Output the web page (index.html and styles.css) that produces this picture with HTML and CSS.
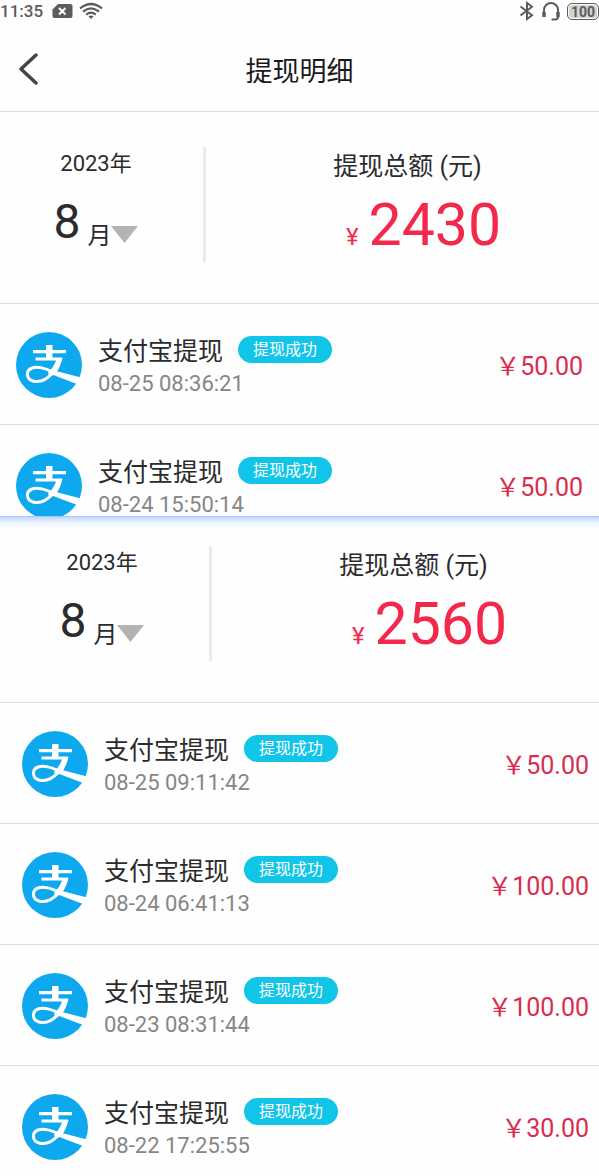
FILE: index.html
```html
<!DOCTYPE html>
<html lang="zh-CN">
<head>
<meta charset="utf-8">
<meta name="viewport" content="width=device-width, initial-scale=1">
<title>提现明细</title>
<link rel="stylesheet" href="styles.css">
</head>
<body>
<svg class="defs" aria-hidden="true">
  <symbol id="alipay" viewBox="0 0 66 66">
    <circle cx="33" cy="33" r="33" fill="#0ea8ee"/>
    <path d="M17 18H50V21.200H17ZM30 13H36.500V27H30ZM19.500 25.500H46V28.500H19.500Z" fill="#fff"/>
    <path d="M46.500 26C45 32 43 37 40 41L34 45L32 41C36 37 39 32 40.500 27Z" fill="#fff"/>
    <path d="M36 41.500C31 47 24 51 17 49C10 47 9.500 38.500 16 36C22 33.500 30 37 40 41" fill="none" stroke="#fff" stroke-width="3"/>
    <path d="M29 36.500L40 39L65 45.500L61 52L36 42.500Z" fill="#fff"/>
  </symbol>
</svg>

<div class="status">
  <div class="status-group">
    <span class="clock">11:35</span>
    <svg width="21" height="16" viewBox="0 0 21 16" aria-hidden="true"><path d="M6 1H18.500Q20.500 1 20.500 3V13Q20.500 15 18.500 15H2.500Q.5 15 .5 13V6.500Z" fill="#5c5c5c"/><path d="M7 5L13.500 11.500M13.500 5L7 11.500" stroke="#fff" stroke-width="2"/></svg>
    <svg width="24" height="18" viewBox="0 0 24 18" fill="none" stroke="#5c5c5c" stroke-width="2.200" aria-hidden="true"><path d="M1 6.500Q12-2.500 23 6.500M4 9.700Q12 3 20 9.700M7.200 12.700Q12 8.700 16.800 12.700"/><path d="M9.500 14.500Q12 12.500 14.500 14.500L12 17Z" fill="#5c5c5c" stroke="none"/></svg>
  </div>
  <div class="status-group">
    <svg width="16" height="20" viewBox="0 0 16 20" fill="none" stroke="#5c5c5c" stroke-width="2" aria-hidden="true"><path d="M1.500 5.500L13 14.200L8 18V2L13 5.800L1.500 14.500"/></svg>
    <svg width="20" height="20" viewBox="0 0 20 20" fill="none" stroke="#5c5c5c" stroke-width="2" aria-hidden="true"><path d="M3 14V9A7 7 0 0 1 17 9V16Q17 18.500 14 18.500H10.500"/><path d="M3 11V16M17 11V16" stroke-width="3.500"/></svg>
    <span class="battery">100</span>
  </div>
</div>

<header class="nav">
  <button class="back" type="button" aria-label="返回"><svg width="20" height="32" viewBox="0 0 20 32" fill="none" stroke="#444" stroke-width="3.500" stroke-linecap="round" stroke-linejoin="round" aria-hidden="true"><path d="M17 2L2 16L17 30"/></svg></button>
  <h1>提现明细</h1>
</header>

<section class="panel panel-first">
  <div class="summary">
    <div class="period">
      <span class="year">2023年</span>
      <button class="month" type="button"><span class="num">8</span><span class="unit">月</span><svg width="27" height="17" viewBox="0 0 27 17" aria-hidden="true"><path d="M0 0H27L13.500 17Z" fill="#b3b3b3"/></svg></button>
    </div>
    <div class="total">
      <span class="label">提现总额 (元)</span>
      <span class="sum"><span class="yen">¥</span><span>2430</span></span>
    </div>
  </div>
  <ul class="list">
    <li class="row">
      <svg class="logo" aria-hidden="true"><use href="#alipay"/></svg>
      <div class="info"><div class="head"><span class="name">支付宝提现</span><span class="tag">提现成功</span></div><time>08-25 08:36:21</time></div>
      <span class="amount">￥50.00</span>
    </li>
    <li class="row row-cut">
      <svg class="logo" aria-hidden="true"><use href="#alipay"/></svg>
      <div class="info"><div class="head"><span class="name">支付宝提现</span><span class="tag">提现成功</span></div><time>08-24 15:50:14</time></div>
      <span class="amount">￥50.00</span>
    </li>
  </ul>
</section>

<section class="panel panel-second">
  <div class="summary">
    <div class="period">
      <span class="year">2023年</span>
      <button class="month" type="button"><span class="num">8</span><span class="unit">月</span><svg width="27" height="17" viewBox="0 0 27 17" aria-hidden="true"><path d="M0 0H27L13.500 17Z" fill="#b3b3b3"/></svg></button>
    </div>
    <div class="total">
      <span class="label">提现总额 (元)</span>
      <span class="sum"><span class="yen">¥</span><span>2560</span></span>
    </div>
  </div>
  <ul class="list">
    <li class="row">
      <svg class="logo" aria-hidden="true"><use href="#alipay"/></svg>
      <div class="info"><div class="head"><span class="name">支付宝提现</span><span class="tag">提现成功</span></div><time>08-25 09:11:42</time></div>
      <span class="amount">￥50.00</span>
    </li>
    <li class="row">
      <svg class="logo" aria-hidden="true"><use href="#alipay"/></svg>
      <div class="info"><div class="head"><span class="name">支付宝提现</span><span class="tag">提现成功</span></div><time>08-24 06:41:13</time></div>
      <span class="amount">￥100.00</span>
    </li>
    <li class="row">
      <svg class="logo" aria-hidden="true"><use href="#alipay"/></svg>
      <div class="info"><div class="head"><span class="name">支付宝提现</span><span class="tag">提现成功</span></div><time>08-23 08:31:44</time></div>
      <span class="amount">￥100.00</span>
    </li>
    <li class="row row-last">
      <svg class="logo" aria-hidden="true"><use href="#alipay"/></svg>
      <div class="info"><div class="head"><span class="name">支付宝提现</span><span class="tag">提现成功</span></div><time>08-22 17:25:55</time></div>
      <span class="amount">￥30.00</span>
    </li>
  </ul>
</section>
</body>
</html>
```

FILE: styles.css
```css
* { box-sizing: border-box; }
body {
  margin: 0;
  background: #fefefe;
  color: #2b2b2d;
  font-family: Roboto, "Noto Sans CJK SC", sans-serif;
}
button { padding: 0; border: 0; background: none; color: inherit; font: inherit; cursor: pointer; }
svg { display: block; flex: none; }
.defs { position: absolute; width: 0; height: 0; }

.status { display: flex; justify-content: space-between; height: 24px; color: #5c5c5c; }
.status-group { display: flex; align-items: center; gap: 6px; height: 22px; }
.clock { margin-right: 3px; font-size: 17px; font-weight: 500; line-height: 22px; }
.battery {
  width: 32px;
  height: 17px;
  border: 1px solid #5c5c5c;
  border-radius: 5px;
  box-shadow: inset 0 0 0 1px #fefefe;
  background: #d2d2d2;
  font-size: 14px;
  font-weight: 700;
  line-height: 16px;
  text-align: center;
}

.nav {
  display: grid;
  grid-template-columns: 48px 1fr 48px;
  align-items: center;
  height: 88px;
  padding-top: 2px;
  border-bottom: 1px solid #dedede;
}
.back { display: flex; padding-left: 19px; }
.nav h1 { margin: 0; padding-top: 6px; color: #1a1a1a; font-size: 27px; font-weight: 400; line-height: 40px; text-align: center; }

.panel { --left: 16px; --right: 16px; --top: 35px; }
.panel-first { overflow: hidden; }
.panel-second {
  --left: 22px;
  --right: 10px;
  --top: 29px;
  border-top: 1px solid #a6c8f8;
  background: linear-gradient(#c0d9fb, #eaf3fe 5px, #fefefe 12px) no-repeat;
}

.summary { display: flex; padding: var(--top) var(--right) 41px var(--left); }
.period {
  display: flex;
  flex-direction: column;
  align-items: center;
  width: 190px;
  height: 115px;
  padding-right: 27px;
  border-right: 3px solid #ebebeb;
}
.year { font-size: 22px; line-height: 34px; }
.month { display: flex; align-items: flex-end; height: 71px; }
.num { margin-right: 7px; font-size: 48px; line-height: 60px; }
.unit { font-size: 24px; line-height: 32px; }
.month svg { margin-bottom: 9px; }
.total { display: flex; flex: 1; flex-direction: column; align-items: center; padding-left: 26px; }
.label { font-size: 25px; line-height: 40px; }
.sum {
  display: flex;
  align-items: baseline;
  gap: 10px;
  padding-left: 32px;
  color: #f2294d;
  font-size: 59px;
  line-height: 75px;
}
.yen { font-size: 24px; line-height: 24px; }

.list { margin: 0; padding: 0; list-style: none; }
.row {
  display: flex;
  align-items: flex-start;
  gap: 16px;
  padding: 28px var(--right) 22px var(--left);
  border-top: 1px solid #dedede;
}
.row-cut { height: 92px; padding-bottom: 0; }
.row-last { padding-bottom: 12px; }
.logo { width: 66px; height: 66px; }
.info { flex: 1; }
.head { display: flex; align-items: flex-start; gap: 15px; }
.name { font-size: 25px; line-height: 40px; white-space: nowrap; }
.tag {
  margin-top: 4px;
  padding: 1px 15px 0;
  border-radius: 14px;
  background: #11c5e9;
  color: #fff;
  font-size: 16px;
  line-height: 26px;
  white-space: nowrap;
}
time { display: block; color: #868686; font-size: 22px; line-height: 24px; }
.amount { color: #d92d50; font-size: 25px; line-height: 70px; white-space: nowrap; }
```
